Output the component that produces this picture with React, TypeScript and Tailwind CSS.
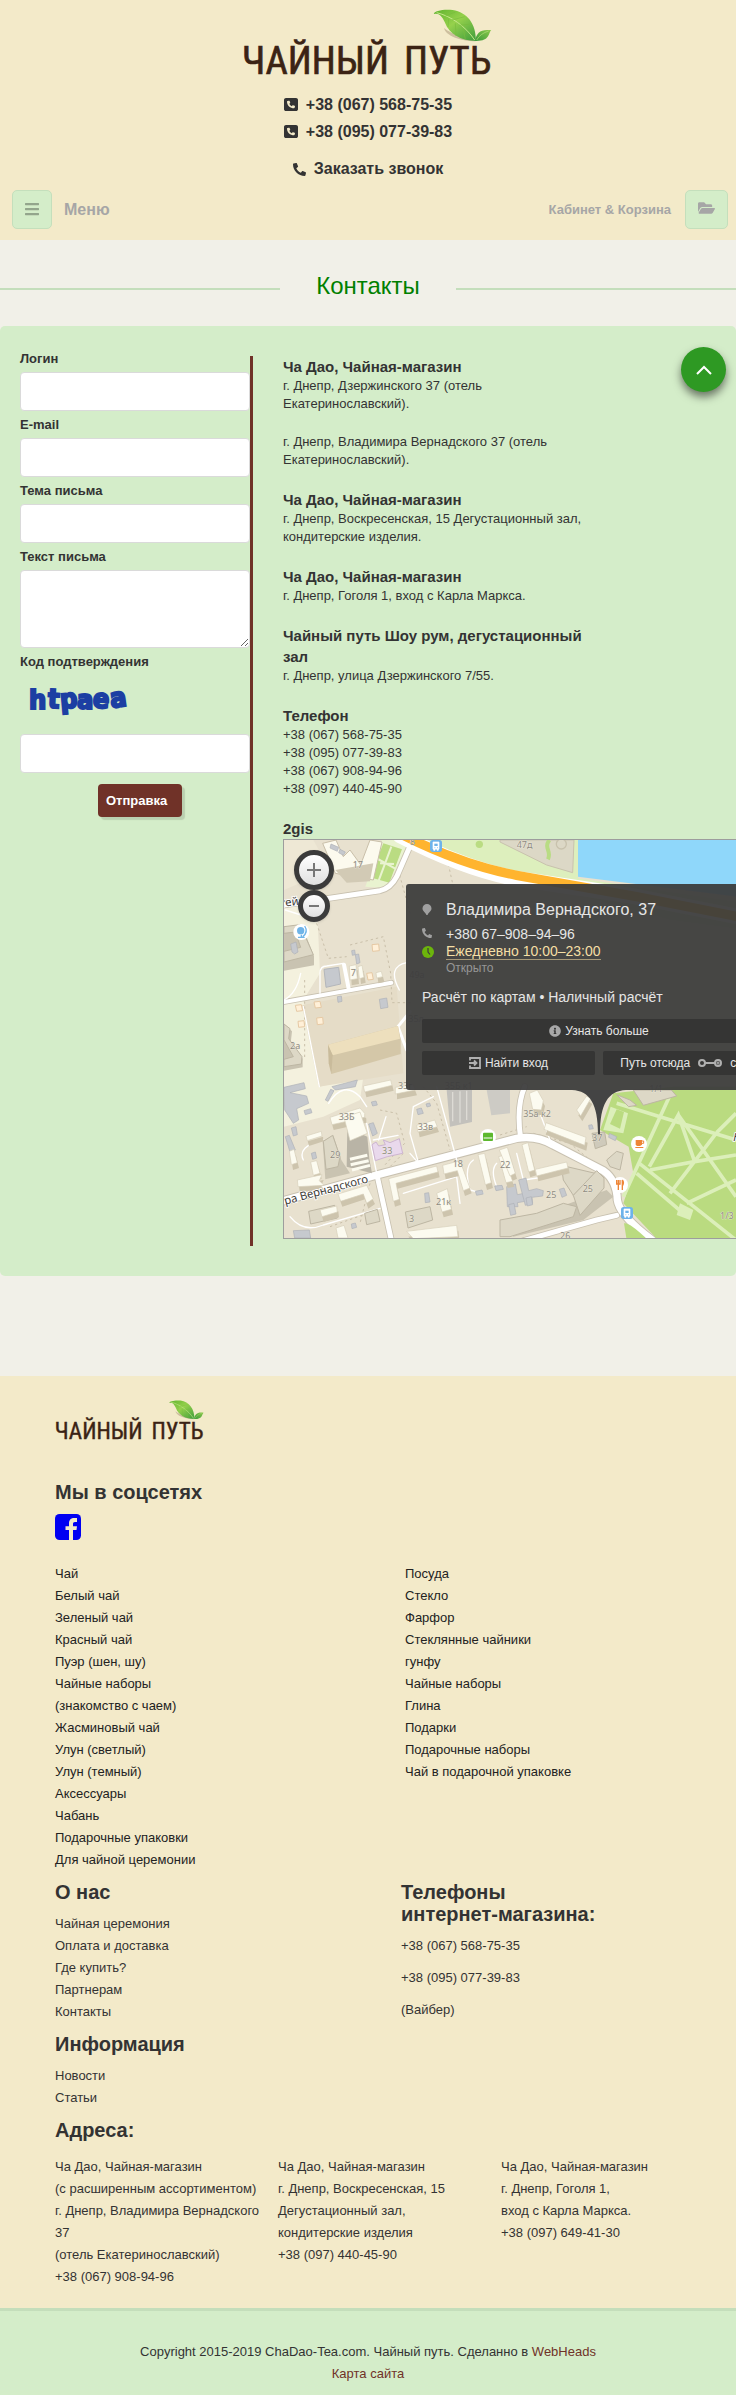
import { FaBars, FaFolderOpen, FaPhone, FaInfoCircle } from "react-icons/fa";
import { FaSquarePhone } from "react-icons/fa6";

const teaLinks = [
  "Чай", "Белый чай", "Зеленый чай", "Красный чай", "Пуэр (шен, шу)", "Чайные наборы", "(знакомство с чаем)",
  "Жасминовый чай", "Улун (светлый)", "Улун (темный)", "Аксессуары", "Чабань", "Подарочные упаковки", "Для чайной церемонии",
];
const wareLinks = [
  "Посуда", "Стекло", "Фарфор", "Стеклянные чайники", "гунфу", "Чайные наборы", "Глина", "Подарки",
  "Подарочные наборы", "Чай в подарочной упаковке",
];
const aboutLinks = ["Чайная церемония", "Оплата и доставка", "Где купить?", "Партнерам", "Контакты"];
const infoLinks = ["Новости", "Статьи"];

const addresses = [
  ["Ча Дао, Чайная-магазин", "(с расширенным ассортиментом)", "г. Днепр, Владимира Вернадского 37", "(отель Екатеринославский)", "+38 (067) 908-94-96"],
  ["Ча Дао, Чайная-магазин", "г. Днепр, Воскресенская, 15", "Дегустационный зал,", "кондитерские изделия", "+38 (097) 440-45-90"],
  ["Ча Дао, Чайная-магазин", "г. Днепр, Гоголя 1,", "вход с Карла Маркса.", "+38 (097) 649-41-30"],
];

const shops = [
  { title: "Ча Дао, Чайная-магазин", paragraphs: [["г. Днепр, Дзержинского 37 (отель Екатеринославский)."], ["г. Днепр, Владимира Вернадского 37 (отель Екатеринославский)."]] },
  { title: "Ча Дао, Чайная-магазин", paragraphs: [["г. Днепр, Воскресенская, 15 Дегустационный зал, кондитерские изделия."]] },
  { title: "Ча Дао, Чайная-магазин", paragraphs: [["г. Днепр, Гоголя 1, вход с Карла Маркса."]] },
  { title: "Чайный путь Шоу рум, дегустационный зал", paragraphs: [["г. Днепр, улица Дзержинского 7/55."]] },
  { title: "Телефон", paragraphs: [["+38 (067) 568-75-35", "+38 (095) 077-39-83", "+38 (067) 908-94-96", "+38 (097) 440-45-90"]] },
];

function Logo({ className, id }: { className: string; id: string }) {
  return (
    <svg viewBox="39 27 750 201" className={className} role="img" aria-label="Чайный путь">
      <defs>
        <linearGradient id={`${id}-leaf`} x1="0" y1="0" x2="1" y2="1">
          <stop offset="0" stopColor="#5fb32e" />
          <stop offset="0.45" stopColor="#96d14c" />
          <stop offset="1" stopColor="#3f9c3c" />
        </linearGradient>
        <linearGradient id={`${id}-small`} x1="1" y1="0" x2="0" y2="1">
          <stop offset="0" stopColor="#8cc94a" />
          <stop offset="1" stopColor="#3c9a3a" />
        </linearGradient>
      </defs>
      <g fill="#3b2314" fontFamily="'Liberation Sans Narrow', 'Roboto Condensed', 'Liberation Sans', sans-serif" fontWeight="400" fontSize="116" stroke="#3b2314" strokeWidth="2">
        <text x="36" y="221">ЧАЙНЫЙ</text>
        <text x="522" y="221">ПУТЬ</text>
      </g>
      <path d="M642 84C646 106 690 124 738 124L700 112C670 102 655 94 642 84Z" fill="#cdbf9e" />
      <path d="M612 42C608 34 640 26 668 30C712 38 738 70 738 123C694 122 658 104 644 66C636 48 626 38 612 42Z" fill={`url(#${id}-leaf)`} />
      <path d="M620 38C662 48 706 78 734 120" fill="none" stroke="#c5e88a" strokeWidth="3" />
      <path d="M646 48L676 36M666 60L704 50M688 76L726 72M656 56L654 82M676 70L678 108M700 88L706 118" stroke="#78bd3c" strokeWidth="2" />
      <path d="M736 123C738 98 754 86 784 91C774 98 782 124 736 123Z" fill={`url(#${id}-small)`} />
      <path d="M740 120C748 106 760 98 776 93" fill="none" stroke="#b5df7a" strokeWidth="2" />
    </svg>
  );
}

function Captcha() {
  return (
    <svg viewBox="0 0 120 50" className="block h-[50px] w-[120px]" role="img" aria-label="Код подтверждения">
      <g fill="#1c3fa3" stroke="#1c3fa3" strokeWidth="2" fontFamily="'DejaVu Sans Condensed', 'DejaVu Sans', sans-serif" fontWeight="700" fontSize="27">
        <text x="9" y="34">h</text>
        <text x="28" y="33" transform="rotate(3 32 24)">t</text>
        <text x="40" y="33" transform="rotate(-5 48 25)">p</text>
        <text x="57" y="34">a</text>
        <text x="73" y="33" transform="rotate(5 80 24)">e</text>
        <text x="90" y="32" transform="rotate(-8 97 24)">a</text>
      </g>
    </svg>
  );
}

const smallHouses = [
  "183,72 206,82 202,94 180,84", "210,88 226,96 220,106 206,98", "62,372 78,366 84,396 74,402 66,396",
  "245,392 254,390 256,404 247,406", "256,404 266,402 270,428 260,432", "328,538 350,534 354,562 332,566",
  "202,530 214,528 216,544 204,547", "296,912 310,908 322,940 308,948", "304,846 318,843 322,855 308,858",
  "440,868 454,864 460,880 444,884", "468,852 479,849 482,858 471,861", "166,840 182,808 192,812 174,844",
  "64,924 78,920 82,944 70,948", "46,950 58,946 76,990 60,996", "102,872 122,866 126,878 106,884",
  "464,1120 476,1118 480,1146 466,1148", "616,1114 636,1110 640,1122 620,1126", "674,1098 696,1096 700,1108 678,1112",
  "244,1212 256,1209 260,1222 246,1226", "956,916 966,914 970,926 958,928", "1018,940 1040,950 1036,962 1016,952",
  "710,1100 736,1092 742,1124 762,1120 766,1144 742,1148 744,1160 712,1160", "746,1080 768,1074 776,1112 800,1106 820,1112 818,1128 786,1132 788,1150 766,1156",
  "768,1134 784,1130 788,1154 772,1158", "868,1108 882,1104 890,1126 876,1132", "716,1154 732,1150 738,1182 722,1186",
  "124,1000 136,996 140,1014 128,1018",
];

const kiosks = ["306,374 326,372 328,392 308,394", "290,460 306,458 310,478 294,480", "76,556 94,554 98,572 80,574", "132,546 150,544 154,562 136,564", "84,604 102,602 104,620 86,622", "140,594 158,592 160,612 142,614"];

const paleHouses = [
  "82,1080 156,1064 148,1082 162,1096 84,1100", "180,892 270,864 284,880 284,892 186,914",
  "108,948 154,934 156,948 112,962", "204,1122 290,1096 310,1136 290,1150 280,1122 212,1144", "122,1026 140,1022 150,1060 130,1066",
  "280,798 362,780 366,796 284,816", "356,1076 500,1038 504,1056 378,1090 388,1138 370,1144", "518,1036 570,1022 600,1104 580,1112 562,1052 522,1062",
  "624,1004 644,1000 664,1088 646,1094", "686,1010 700,1006 728,1084 708,1088", "500,1120 532,1106 544,1168 516,1176",
  "410,1234 560,1216 564,1250 430,1256", "440,916 494,900 502,920 444,936", "376,802 430,794 436,810 376,822",
  "756,974 774,968 794,1050 776,1056", "796,1048 890,1026 894,1044 800,1068", "688,990 712,982 736,1060 720,1068",
  "828,908 948,952 944,976 822,928", "778,820 802,810 820,842 814,870 788,868", "920,870 950,828 962,836 932,888",
  "58,994 72,988 82,1028 64,1034", "150,1170 200,1158 202,1176 156,1190", "198,1224 222,1216 234,1254 204,1254",
  "238,438 258,434 262,476 240,480", "264,440 276,436 282,472 268,476", "318,458 334,454 338,470 320,474",
];

function CityMap() {
  return (
    <svg viewBox="42 60 1920 1200" className="absolute left-0 top-0 h-[400px] w-[640px] max-w-none" aria-hidden="true">
      <rect x="42" y="60" width="1920" height="1200" fill="#e8e1cf" />
      <path d="M42 250L140 235L150 460L100 540L148 800L280 770L270 840L160 890L42 920Z" fill="#f4f1de" />
      <path d="M42 60H130L180 150L42 210Z" fill="#eee8d5" />
      <path d="M96 556L380 500L400 760L146 800Z" fill="#e5dcc7" />
      <path d="M440 60H924V175L1400 245L1960 300V400L1200 300L900 220L680 150L520 110Z" fill="#ddefbd" />
      <path d="M924 60H1962V300L924 170Z" fill="#8fd7fa" />
      <path d="M690 66L830 135L908 158L912 60H690Z" fill="#dcd8c6" stroke="#c8c2ad" strokeWidth="3" />
      <path d="M838 60C820 85 846 92 834 118" fill="none" stroke="#b9dc83" strokeWidth="12" />
      <circle cx="874" cy="72" r="15" fill="#dcd8c6" stroke="#c8c2ad" strokeWidth="4" />
      <circle cx="628" cy="73" r="11" fill="#badc82" />
      <path d="M335 60H420L350 205L286 200Z" fill="#e9f3d0" />
      <path d="M340 70L396 88L358 188L300 172Z" fill="#badc82" />
      <path d="M364 80L326 182M318 114L380 148M330 130L372 132" stroke="#e9f3d0" strokeWidth="6" />

      <g stroke="#c9bfa9" strokeWidth="3" fill="none" strokeDasharray="7 9">
        <path d="M385 150L420 280M140 310L175 415L230 410M240 375L340 350L362 460L366 548L430 548M430 80L530 110L550 200M330 870L380 880L404 970L340 1040M460 800L500 850L540 990M690 945L770 920M180 1220L320 1170M790 940L900 970L1020 1070M104 480L104 720M400 1000L340 1060M300 1090L270 1210" />
      </g>

      <g fill="none" strokeLinecap="round" strokeLinejoin="round">
        <g stroke="#c8c1b0">
          <path d="M42 255L330 212Q362 205 380 170L428 60" strokeWidth="20" />
          <path d="M42 546L364 488" strokeWidth="17" />
          <path d="M42 1142L320 1065L740 955Q800 945 850 975L1000 1052Q1040 1080 1042 1140Q1048 1186 1146 1260" strokeWidth="28" />
          <path d="M322 1070L364 1260M752 955Q738 860 764 800M1040 1186L980 1200L760 1262" strokeWidth="20" />
        </g>
        <g stroke="#ffffff">
          <path d="M42 255L330 212Q362 205 380 170L428 60" strokeWidth="15" />
          <path d="M42 546L364 488M222 434L236 506" strokeWidth="12" />
          <path d="M42 1142L320 1065L740 955Q800 945 850 975L1000 1052Q1040 1080 1042 1140Q1048 1186 1146 1260" strokeWidth="22" />
          <path d="M322 1070L364 1260M752 955Q738 860 764 800M1040 1186L980 1200L760 1262" strokeWidth="15" />
          <path d="M410 690L384 620L420 575" strokeWidth="9" />
          <g strokeWidth="4">
            <path d="M46 270L140 300M150 520L150 460Q150 438 170 438L220 430M388 510Q350 440 410 428M176 850Q220 780 270 830L290 860M290 910L320 1060M348 890L326 960M310 960L384 946M420 1000L446 1030M430 860L420 940L446 1030M430 860L490 830M500 800L560 1020M100 1020Q80 980 160 958M60 1190Q100 1240 160 1215L330 1165M400 1120L560 1070L570 1150M100 560L148 800M92 460Q80 520 42 540M810 880L840 960M610 1020Q580 1040 600 1110L640 1120M680 1030Q660 1050 680 1100M740 1000L760 1080L900 1060" />
          </g>
        </g>
        <path d="M390 46Q580 145 740 176L1100 230L1960 400" stroke="#ffffff" strokeWidth="46" />
        <path d="M400 46Q580 136 740 166L1100 230L1960 400" stroke="#ffb42e" strokeWidth="28" />
      </g>

      <path d="M1030 820L1210 800H1962V1260H1164L1060 1150L1090 1060L1076 980L990 930Z" fill="#badb80" />
      <path d="M1062 1210Q1076 1204 1134 1260H1070Z" fill="#badb80" />
      <g stroke="#dcefba" fill="none" strokeWidth="11">
        <path d="M1040 850L1170 890L1398 960M1060 1130L1198 830M1138 1040L1225 885L1274 1025L1140 1050M1225 885L1398 1130M1274 1025L1398 1005M1340 938L1398 880M1340 938L1200 1120M1108 1030L1398 1260M1250 1150L1398 1080M1100 1060L1240 1180" />
      </g>
      <path d="M1022 860L1074 880L1060 940L1000 930Z" fill="#dcefba" />
      <path d="M1040 868L1062 876L1050 926L1020 912Z" fill="#badb80" />
      <path d="M1230 1150L1270 1170L1260 1200L1220 1185Z" fill="#dcefba" />

      <g fill="#c9c3b1">
        <path d="M42 326L98 322L132 408V436L42 452Z" />
        <path d="M42 612L66 634L62 670L98 716V742L42 752Z" />
        <path d="M232 924L292 950L298 1016L306 1060L230 1040Z" fill="#b9b4a6" />
        <path d="M158 964L190 946L214 1020L240 1060L166 1078Z" />
        <path d="M716 1216L1010 1110L1030 1130L940 1200L730 1250Z" />
      </g>
      <g fill="#ddd8c6" stroke="#bdb6a3" strokeWidth="3">
        <path d="M42 320L90 314L130 404L42 426V394L92 382L76 336L42 340Z" />
        <path d="M42 612L60 626L56 656L96 710L94 732L42 740V718L70 710L42 660Z" />
        <path d="M160 964L188 946L210 1010L204 1040L168 1048Z" />
        <path d="M116 1174L194 1156L202 1194L122 1212Z" />
        <path d="M406 1176L480 1160L488 1200L414 1224Z" />
        <path d="M284 1180L322 1168L330 1204L290 1214Z" />
        <path d="M874 1036L976 1060L910 1126L880 1080Z" />
        <path d="M910 1126L980 1052L1002 1074L1002 1104L930 1186Z" />
        <path d="M690 1200L800 1180L880 1150L920 1160L910 1190L720 1250L690 1250Z" />
        <path d="M1010 1020L1040 994L1060 1000L1050 1050L1020 1040Z" />
        <path d="M966 940L1004 936L1010 974L976 986Z" fill="#cfcabb" />
        <path d="M1090 810H1204L1220 828L1120 856Z" />
        <path d="M1040 824L1080 840L1100 856L1076 860Z" />
      </g>
      <path d="M158 70L198 60L220 110L240 90L272 134L300 60L336 66L310 180L196 160Z" fill="#fcfaee" stroke="#c9bfa9" strokeWidth="3" />
      <path d="M196 150L310 130L300 184L230 188Z" fill="#d2cab5" />

      <path d="M174 674L384 618L392 658V702L184 762Z" fill="#d4c7a8" />
      <path d="M174 674L384 618L390 656L188 706Z" fill="#eddfbd" />
      <path d="M174 674L188 706L184 762L176 730Z" fill="#c9bb9b" />
      <path d="M162 448L206 442L212 492L168 502Z" fill="#c6c9ce" stroke="#b3b6bb" strokeWidth="3" />
      <g fill="#c6c9ce" stroke="#aeb1b6" strokeWidth="2">
        {smallHouses.map((points) => <polygon key={points} points={points} />)}
        <path d="M42 802L102 788L106 806L60 818L110 828L116 850L80 866L86 900L70 910L44 870Z" />
        <path d="M186 800L262 780L256 800L196 810Z" />
        <path d="M70 1232L118 1230L122 1254H74Z" />
      </g>
      <g fill="#fff0d8" stroke="#e6c9a4" strokeWidth="3">
        {kiosks.map((points) => <polygon key={points} points={points} />)}
      </g>
      <g fill="#cdc4ad" transform="translate(5 16)">
        {paleHouses.map((points) => <polygon key={points} points={points} />)}
      </g>
      <g fill="#fcfbf0" stroke="#d6ceb9" strokeWidth="2">
        {paleHouses.map((points) => <polygon key={points} points={points} />)}
        <path d="M222 892L270 876L292 940L240 962Z" />
        <path d="M240 1018L292 1006M242 1034L296 1022M246 1050L300 1036" stroke="#fcfbf0" strokeWidth="9" />
      </g>
      <path d="M530 810H606V906L540 920Z" fill="#c3c1bc" />
      <path d="M650 810H720V880L664 886Z" fill="#cdcbc5" />
      <path d="M548 816V904M570 814V908M590 812V900" stroke="#dddbd5" strokeWidth="4" />
      <path d="M306 974L318 966L326 978L346 974L340 960L360 968L388 956L398 1000L352 1010L316 1022Z" fill="#e9d9ec" stroke="#cdb5d1" strokeWidth="3" />

      <g fill="#8d8a80" fontFamily="'Noto Sans', sans-serif" fontSize="27" stroke="#f4efe2" strokeWidth="2" paintOrder="stroke">
        <text x="248" y="143">17</text><text x="242" y="468">7</text><text x="60" y="686">2a</text>
        <text x="206" y="899">33Б</text><text x="384" y="806">33г</text><text x="443" y="930">33в</text>
        <text x="336" y="1002">33</text><text x="180" y="1013">29</text><text x="548" y="1040">18</text>
        <text x="498" y="1154">21к</text><text x="417" y="1205">3</text><text x="740" y="83">47д</text>
        <text x="760" y="890">35а к2</text><text x="966" y="962">37</text><text x="690" y="1043">22</text>
        <text x="828" y="1133">25</text><text x="938" y="1116">25</text><text x="870" y="1256">26</text>
        <text x="1138" y="816">1/1</text><text x="1350" y="1196">1/3</text><text x="524" y="808">35Б к1</text>
        <text x="415" y="606">35л</text><text x="418" y="474">49а</text><text x="420" y="76">8</text>
      </g>
      <g fill="#3f3d39" fontFamily="'Noto Sans', sans-serif" fontSize="34" stroke="#ffffff" strokeWidth="5" paintOrder="stroke">
        <text x="32" y="262" transform="rotate(-8 32 262)">тей</text>
        <text x="46" y="1154" transform="rotate(-15 46 1154)">ра Вернадского</text>
        <text x="1390" y="962" fontStyle="italic">К</text>
      </g>

      <circle cx="94" cy="336" r="24" fill="#fff" />
      <path d="M104 318Q116 336 98 350M84 352H104M94 344V352" fill="none" stroke="#6fb4e8" strokeWidth="4" />
      <circle cx="92" cy="332" r="11" fill="#6fb4e8" />
      <circle cx="654" cy="951" r="24" fill="#fff" />
      <rect x="639" y="938" width="30" height="25" rx="3" fill="#5db82e" />
      <path d="M641 954H667" stroke="#fff" strokeWidth="3" />
      <circle cx="1107" cy="972" r="24" fill="#fff" />
      <path d="M1097 960H1116V974L1110 978H1101L1097 974ZM1096 981H1120V984H1096Z" fill="#ee8536" />
      <path d="M1116 963H1121V970H1116" fill="none" stroke="#ee8536" strokeWidth="3" />
      <circle cx="1050" cy="1095" r="24" fill="#fff" />
      <path d="M1045 1080V1110M1040 1080V1092H1050V1080M1057 1080V1110M1057 1080Q1063 1088 1058 1096" fill="none" stroke="#ee8536" strokeWidth="4" />
      {[[480, 60], [1053, 1161]].map(([x, y]) => (
        <g key={x} transform={`translate(${x} ${y})`}>
          <rect width="36" height="36" rx="8" fill="#6db3ea" />
          <path d="M9 6H27V27H9ZM11 27V31H15V27M21 27V31H25V27" fill="#fff" stroke="#fff" strokeWidth="2" />
          <path d="M13 11H23V18H13Z" fill="#6db3ea" />
          <path d="M13 23H16M21 23H24" stroke="#6db3ea" strokeWidth="2" />
        </g>
      ))}
    </svg>
  );
}

function MapPopup() {
  return (
    <div className="absolute left-[122px] top-11 h-[206px] w-[386px] rounded-[3px] bg-[#3c3c3c]/94 px-4 pt-[13px] text-[#e6e6e6]">
      <div className="grid grid-cols-[24px_1fr] items-center">
        <svg viewBox="0 0 10 12" className="h-3 w-[10px]" fill="#a0a0a0" aria-hidden="true"><path d="M5 0A4.5 4.5 0 0 1 9.500 4.500C9.500 7 6.500 8.500 5.600 11H4.400C3.500 8.500 .5 7 .5 4.500A4.500 4.500 0 0 1 5 0Z" /></svg>
        <h3 className="flex h-[25px] items-center text-base leading-[18px]">Владимира Вернадского, 37</h3>
        <FaPhone className="h-[10px] w-[10px] -scale-x-100 text-[#a0a0a0]" aria-hidden="true" />
        <p className="mt-1 text-sm leading-[17px]">+380 67–908–94–96</p>
        <svg viewBox="0 0 12 12" className="h-3 w-3" aria-hidden="true"><circle cx="6" cy="6" r="6" fill="#6cb50c" /><path d="M6 2V6L8 8.500" fill="none" stroke="#3c3c3c" strokeWidth="1.200" /></svg>
        <p className="text-sm leading-[17px] text-[#f5dfa5]"><a href="#hours" className="border-b border-[#a89a78]">Ежедневно 10:00–23:00</a></p>
        <p className="col-start-2 text-xs leading-[17px] text-[#969696]">Открыто</p>
      </div>
      <p className="mt-[11px] whitespace-nowrap text-sm leading-[18px]">Расчёт по картам • Наличный расчёт</p>
      <button type="button" className="mt-[13px] flex h-6 w-full items-center justify-center gap-1 rounded-[2px] bg-[#333]/90 text-xs">
        <FaInfoCircle className="h-3 w-3 text-[#a8a8a8]" aria-hidden="true" />Узнать больше
      </button>
      <div className="mt-2 grid grid-cols-2 gap-2 text-xs">
        <button type="button" className="flex h-6 items-center justify-center gap-1 rounded-[2px] bg-[#333]/90">
          <svg viewBox="0 0 12 12" className="h-3 w-3" fill="none" stroke="#b0b0b0" strokeWidth="1.800" aria-hidden="true"><path d="M1 3.500V1H11V11H1V8.500M0 6H7M5 3.500L7.500 6L5 8.500" /></svg>
          Найти вход
        </button>
        <div className="flex h-6 items-center justify-center gap-2 rounded-[2px] bg-[#333]/90">
          <button type="button">Путь отсюда</button>
          <svg viewBox="0 0 24 8" className="h-2 w-6" fill="none" stroke="#b0b0b0" strokeWidth="2" aria-hidden="true"><circle cx="4" cy="4" r="3" /><path d="M7 4H17" /><circle cx="20" cy="4" r="3" /><circle cx="20" cy="4" r="0.500" /></svg>
          <button type="button">сюда</button>
        </div>
      </div>
      <svg viewBox="0 0 54 45" className="absolute left-[166px] top-full h-[45px] w-[54px]" aria-hidden="true"><path d="M0 0H54C36 1 28 14 28 44H26C26 14 18 1 0 0Z" fill="#444444" /></svg>
    </div>
  );
}

function ZoomControls() {
  return (
    <div className="absolute left-[10px] top-[10px] flex w-10 flex-col items-center">
      <button type="button" aria-label="Приблизить" className="flex h-10 w-10 items-center justify-center rounded-full border-[5px] border-[#3b3b3b] bg-linear-to-b from-white to-[#e0e0e0] shadow-sm">
        <svg viewBox="0 0 14 14" className="h-[14px] w-[14px]" stroke="#777" strokeWidth="2" aria-hidden="true"><path d="M0 7H14M7 0V14" /></svg>
      </button>
      <button type="button" aria-label="Отдалить" className="flex h-8 w-8 items-center justify-center rounded-full border-[5px] border-[#3b3b3b] bg-linear-to-b from-white to-[#e0e0e0] shadow-sm">
        <svg viewBox="0 0 10 2" className="h-[2px] w-[10px]" aria-hidden="true"><path d="M0 0H10V2H0Z" fill="#777" /></svg>
      </button>
    </div>
  );
}

function Field({ id, label }: { id: string; label: string }) {
  return (
    <div>
      <label htmlFor={id} className="block text-[13px] font-bold leading-[27px]">{label}</label>
      <input id={id} className="block h-[39px] w-full rounded-[4px] border border-[#dadada] bg-white px-3 text-[13px]" />
    </div>
  );
}

function LinkList({ items }: { items: string[] }) {
  return (
    <ul className="text-[13px] leading-[22px]">
      {items.map((item) => <li key={item}><a href="#catalog">{item}</a></li>)}
    </ul>
  );
}

export default function App() {
  return (
    <div className="overflow-x-hidden bg-[#f1f0e8] font-['Liberation_Sans',Arial,sans-serif] text-[#333]">
      <header className="bg-[#f3eac9] pb-[11px] pt-[9px]">
        <a href="#home" className="mx-auto block w-[250px]"><Logo id="top" className="block h-[67px] w-[250px]" /></a>
        <ul className="mt-[15px] text-center text-base font-bold leading-[27px]">
          {["+38 (067) 568-75-35", "+38 (095) 077-39-83"].map((phone) => (
            <li key={phone} className="flex items-center justify-center gap-2">
              <FaSquarePhone className="h-[15px] w-[14px]" preserveAspectRatio="none" aria-hidden="true" />{phone}
            </li>
          ))}
        </ul>
        <a href="#callback" className="mt-[11px] flex items-center justify-center gap-2 text-base font-bold leading-[26px]">
          <FaPhone className="h-[13px] w-[13px] -scale-x-100" aria-hidden="true" />Заказать звонок
        </a>
        <nav className="mt-2 flex items-center justify-between pl-3 pr-2 font-bold text-[#a6a6a6]">
          <div className="flex items-center gap-3">
            <button type="button" aria-label="Открыть меню" className="flex h-[39px] w-10 items-center justify-center rounded-[5px] border border-[#c4dfbc] bg-[#d4edc9] pb-[2px] text-[#93a58c]">
              <FaBars className="h-4 w-[14px]" aria-hidden="true" />
            </button>
            <span className="text-base">Меню</span>
          </div>
          <div className="flex items-center gap-[14px]">
            <span className="text-[13px]">Кабинет &amp; Корзина</span>
            <button type="button" aria-label="Кабинет и корзина" className="flex h-[39px] w-[43px] items-center justify-center rounded-[5px] border border-[#c4dfbc] bg-[#d4edc9] pb-1">
              <FaFolderOpen className="h-4 w-[17px]" aria-hidden="true" />
            </button>
          </div>
        </nav>
      </header>

      <main>
        <div className="flex items-center gap-9 pb-[25px] pt-[31px]">
          <span className="mt-[6px] h-[2px] flex-1 bg-[#c4debb]" />
          <h1 className="text-2xl leading-[30px] text-[#008000]">Контакты</h1>
          <span className="mt-[6px] h-[2px] flex-1 bg-[#c4debb]" />
        </div>

        <section className="relative flex rounded-[5px] bg-[#d4edc9] pb-[30px] pl-5 pt-[19px]">
          <form className="w-[230px] shrink-0" onSubmit={(event) => event.preventDefault()}>
            <Field id="login" label="Логин" />
            <Field id="email" label="E-mail" />
            <Field id="subject" label="Тема письма" />
            <label htmlFor="message" className="block text-[13px] font-bold leading-[27px]">Текст письма</label>
            <textarea id="message" className="block h-[78px] w-full rounded-[4px] border border-[#dadada] bg-white px-3 py-2 text-[13px]" />
            <label htmlFor="captcha" className="block text-[13px] font-bold leading-[27px]">Код подтверждения</label>
            <Captcha />
            <input id="captcha" className="mt-[9px] block h-[39px] w-full rounded-[4px] border border-[#dadada] bg-white px-3 text-[13px]" />
            <button type="submit" className="ml-[78px] mt-[11px] block h-[33px] w-[84px] rounded-[4px] bg-[#703228] pl-2 text-left text-[13px] font-bold text-white shadow-[3px_3px_1px_rgba(0,0,0,0.12)]">Отправка</button>
          </form>
          <div className="mt-[11px] w-[3px] shrink-0 bg-[#703228]" />
          <div className="ml-[30px] mt-[11px] min-w-0 flex-1 pb-[7px]">
            {shops.map((shop, index) => (
              <div key={index} className="mb-5 max-w-[300px]">
                <h2 className="text-[15px] font-bold leading-[21px]">{shop.title}</h2>
                <div className="flex flex-col gap-5 text-[13px] leading-[18px]">
                  {shop.paragraphs.map((lines) => (
                    <div key={lines[0]}>{lines.map((line) => <p key={line}>{line}</p>)}</div>
                  ))}
                </div>
              </div>
            ))}
            <h2 className="text-[15px] font-bold leading-[21px]">2gis</h2>
            <div className="relative h-[400px] overflow-hidden border border-r-0 border-[#9d9d9d]">
              <CityMap />
              <MapPopup />
              <ZoomControls />
            </div>
          </div>
          <button type="button" aria-label="Наверх" className="absolute right-[10px] top-[21px] flex h-[45px] w-[45px] items-center justify-center rounded-full bg-[#2e9923] shadow-[0_5px_8px_rgba(0,0,0,0.5)]">
            <svg viewBox="0 0 16 10" className="h-[10px] w-4" fill="none" stroke="#fff" strokeWidth="2" aria-hidden="true"><path d="M1 9L8 2L15 9" /></svg>
          </button>
        </section>
      </main>

      <footer className="mt-[100px]">
        <div className="bg-[#f3eac9] pb-5 pl-[55px] pr-3 pt-6">
          <a href="#home" className="block w-[150px]"><Logo id="bottom" className="block h-10 w-[150px]" /></a>
          <h2 className="mt-[41px] text-xl font-bold leading-[22px]">Мы в соцсетях</h2>
          <a href="#facebook" aria-label="Facebook" className="mt-[11px] block w-[26px]">
            <svg viewBox="0 0 26 26" className="block h-[26px] w-[26px]" aria-hidden="true">
              <rect width="26" height="26" rx="4.500" fill="#0000f2" />
              <path d="M14 26V16H10.500V12.200H14V9.500C14 5.800 16 4 19.200 4H22V8H20C18.500 8 18 8.700 18 10V12.200H22L21.500 16H18V26Z" fill="#f3eac9" />
            </svg>
          </a>
          <div className="mt-[23px] grid grid-cols-[350px_1fr] text-[#222]">
            <LinkList items={teaLinks} />
            <LinkList items={wareLinks} />
          </div>
          <div className="mt-[10px] grid grid-cols-[346px_1fr]">
            <div>
              <h2 className="mb-[10px] text-xl font-bold leading-[22px]">О нас</h2>
              <LinkList items={aboutLinks} />
              <h2 className="my-[10px] text-xl font-bold leading-[22px]">Информация</h2>
              <LinkList items={infoLinks} />
            </div>
            <div>
              <h2 className="mb-[10px] text-xl font-bold leading-[22px]">Телефоны<br />интернет-магазина:</h2>
              <div className="flex flex-col gap-[10px] text-[13px] leading-[22px]">
                <a href="tel:+380675687535">+38 (067) 568-75-35</a>
                <a href="tel:+380950773983">+38 (095) 077-39-83</a>
                <p>(Вайбер)</p>
              </div>
            </div>
          </div>
          <h2 className="mb-[15px] mt-[10px] text-xl font-bold leading-[22px]">Адреса:</h2>
          <div className="grid grid-cols-3 text-[13px] leading-[22px]">
            {addresses.map((lines, index) => (
              <address key={index} className="pr-4 not-italic">
                {lines.map((line) => <p key={line}>{line}</p>)}
              </address>
            ))}
          </div>
        </div>
        <div className="border-t-[3px] border-[#c4debb] bg-[#d4edc9] pb-[10px] pt-[30px] text-center text-[13px] leading-[22px]">
          <p>Copyright 2015-2019 ChaDao-Tea.com. Чайный путь. Сделанно в <a href="#webheads" className="text-[#703228]">WebHeads</a></p>
          <a href="#sitemap" className="text-[#703228]">Карта сайта</a>
        </div>
      </footer>
    </div>
  );
}
